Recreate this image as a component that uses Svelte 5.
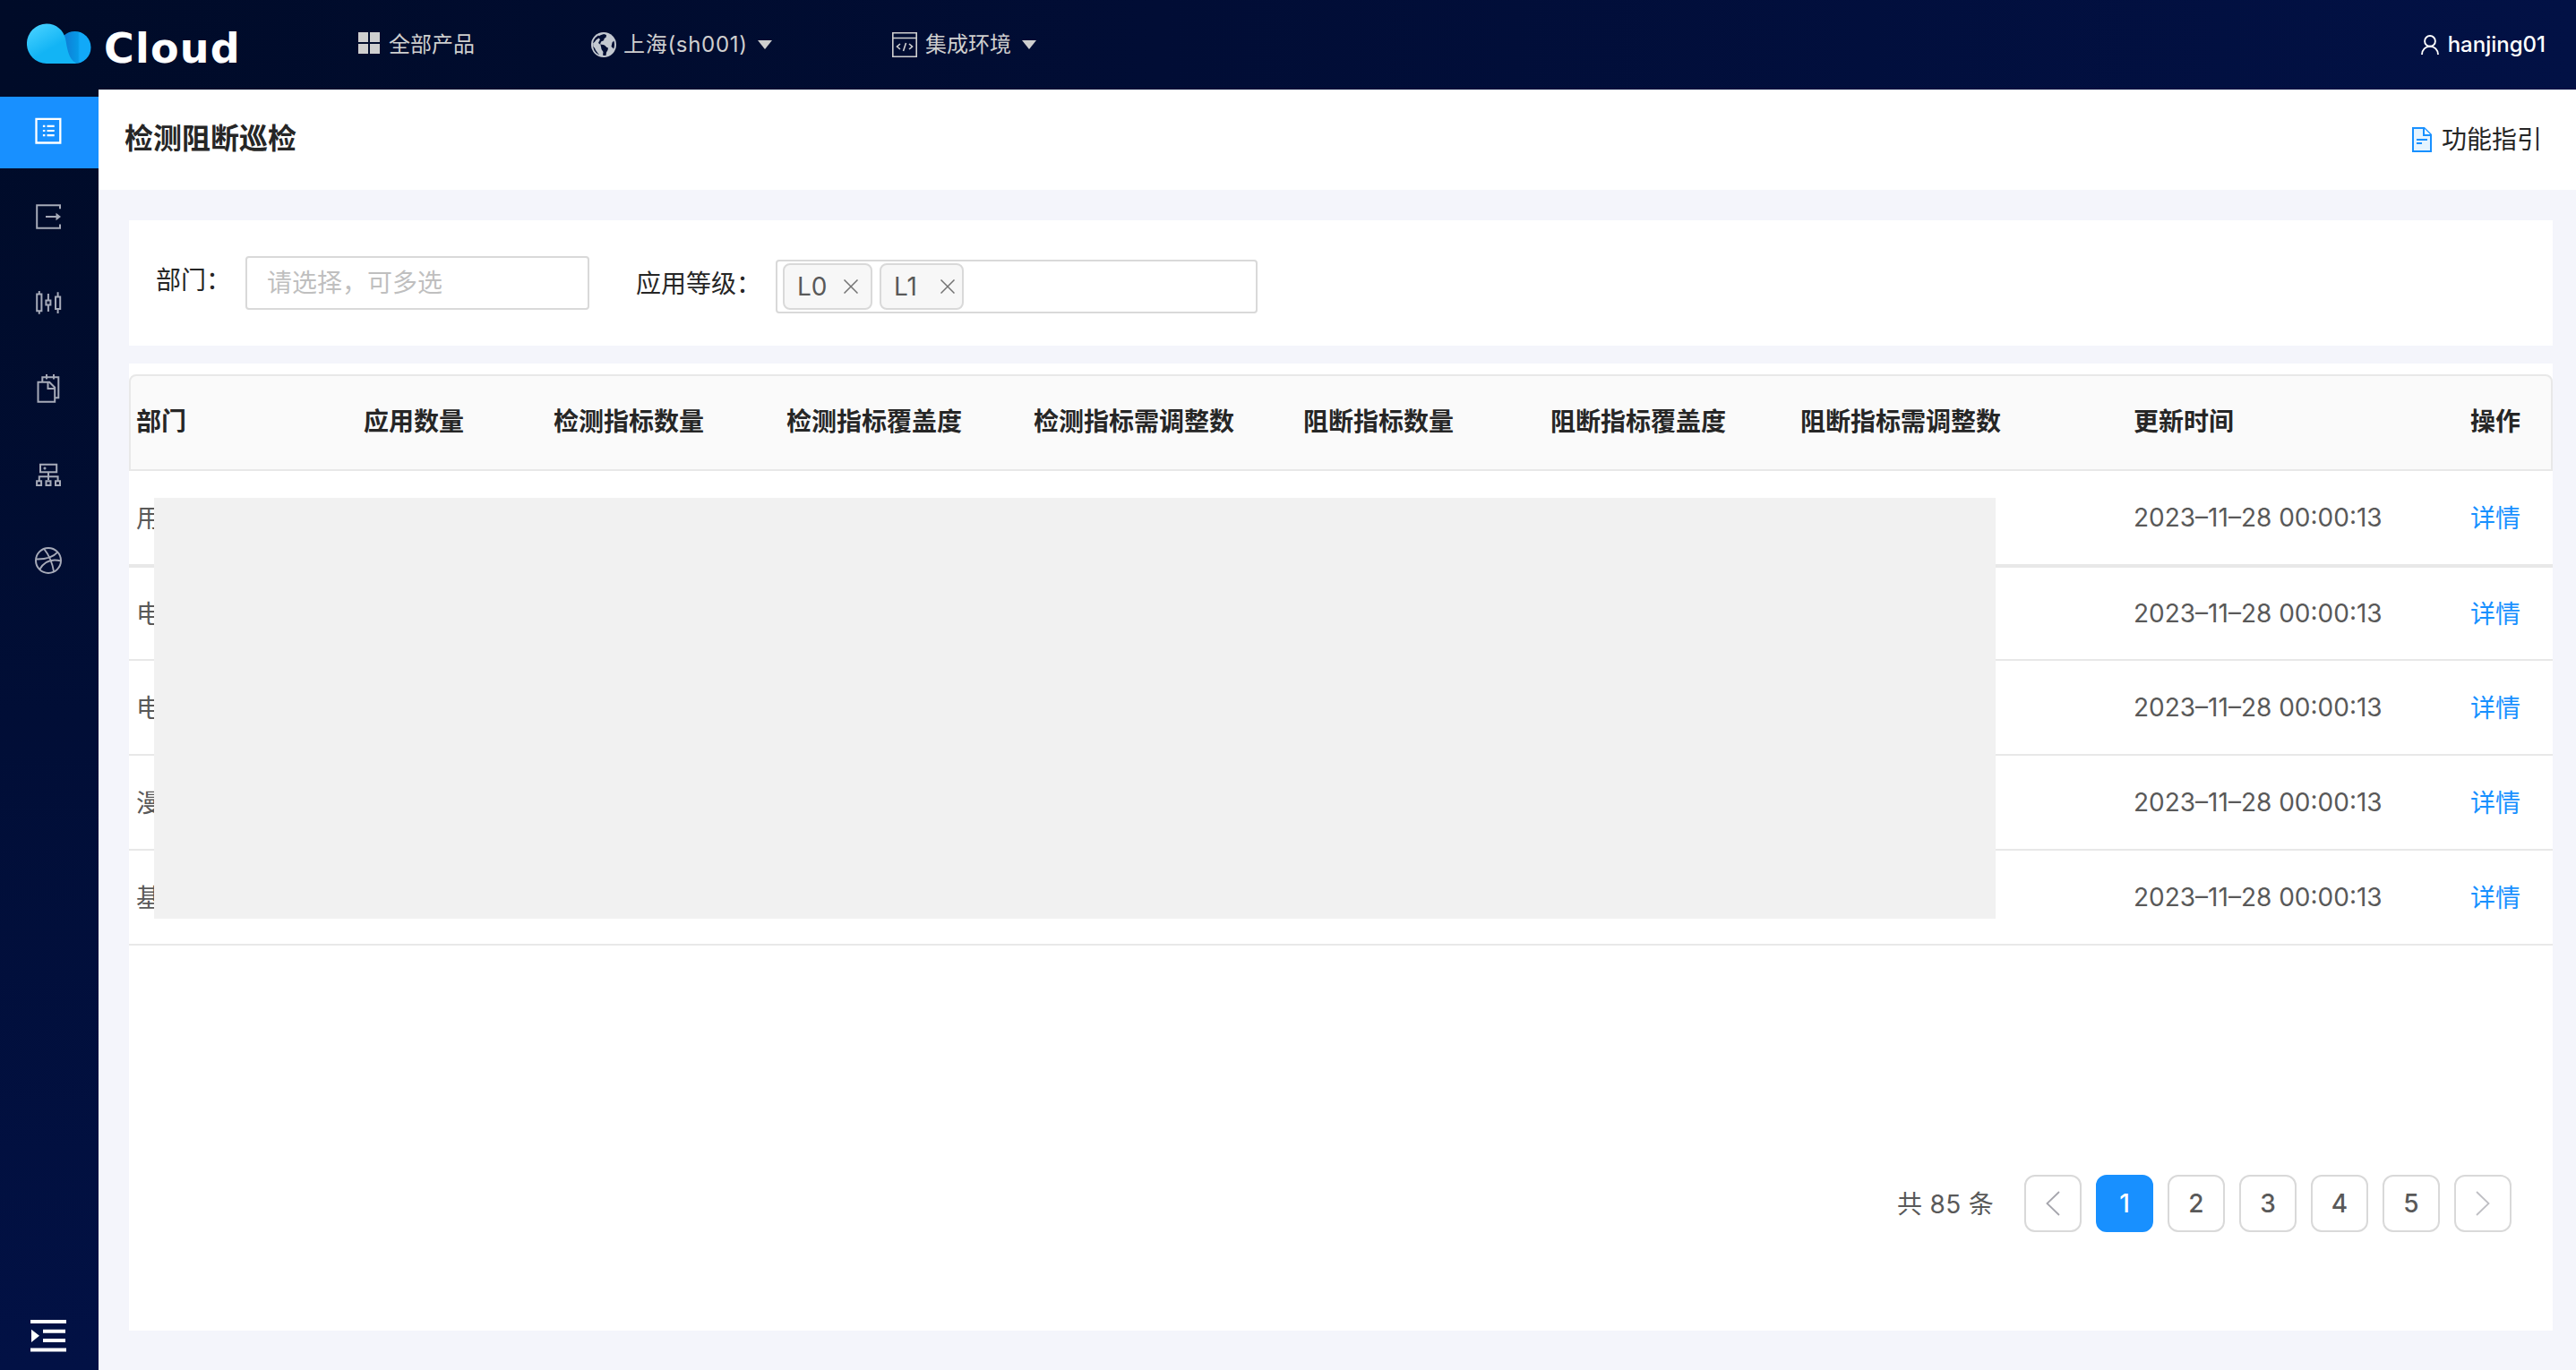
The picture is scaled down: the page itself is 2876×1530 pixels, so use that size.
<script>
	let activeMenu = $state("inspect");
	let page = $state(1);
	let levels = $state(["L0", "L1"]);

	const menus = ["inspect", "export", "metrics", "docs", "cluster", "network"];
	const pages = [1, 2, 3, 4, 5];

	const columns = [
		"部门",
		"应用数量",
		"检测指标数量",
		"检测指标覆盖度",
		"检测指标需调整数",
		"阻断指标数量",
		"阻断指标覆盖度",
		"阻断指标需调整数",
		"更新时间",
		"操作",
	];

	const rows = [
		{ dept: "用", time: "2023–11–28 00:00:13" },
		{ dept: "电", time: "2023–11–28 00:00:13" },
		{ dept: "电", time: "2023–11–28 00:00:13" },
		{ dept: "漫", time: "2023–11–28 00:00:13" },
		{ dept: "基", time: "2023–11–28 00:00:13" },
	];

	const removeLevel = (level) => {
		levels = levels.filter((l) => l !== level);
	};
</script>

<div class="app">
	<header>
		<div class="logo">
			<svg width="72" height="46" viewBox="0 0 72 46">
				<defs>
					<linearGradient id="cloud" x1="0" y1="0" x2="0.7" y2="1">
						<stop offset="0.1" stop-color="#45d0ff" />
						<stop offset="0.65" stop-color="#12b4f5" />
					</linearGradient>
					<linearGradient id="puff" x1="0" y1="0" x2="1" y2="0">
						<stop offset="0" stop-color="#1173d0" />
						<stop offset="0.6" stop-color="#0799e6" />
						<stop offset="0.65" stop-color="#11a9f8" />
					</linearGradient>
				</defs>
				<circle cx="53.5" cy="27" r="18" fill="url(#puff)" />
				<path d="M22 .5C33 .5 41 8 43 17c2 10 3 23 12 27.500Q54 45 52 45H22A22 22.200 0 0 1 22 .5Z" fill="url(#cloud)" />
			</svg>
			<span class="brand">Cloud</span>
		</div>
		<nav>
			<a class="products" href="#products">
				<svg width="24" height="24" viewBox="0 0 24 24" fill="currentColor">
					<path d="M0 0h11v11H0zM13 0h11v11H13zM0 13h11v11H0zM13 13h11v11H13z" />
				</svg>
				<span>全部产品</span>
			</a>
			<a class="region" href="#region">
				<svg width="28" height="28" viewBox="0 0 28 28">
					<circle cx="14" cy="14" r="14" fill="#c3c8d0" />
					<path d="M14 2l3 1-.3 2.500-2.700 2 .3 1.500-3.300 1.500-1 3 3.500.5 2.500 2.500 3 1-.5 2.500-1.500 2.500-.5 3.500a12 12 0 0 1-3 0l-.5-3-2-3 .5-2.500-3-3L4.500 13 6.500 9.500 9 7l.5-2.500L8 3.600A12 12 0 0 0 2.300 16l3.200 3 3.500 6.500a12.500 12.500 0 0 1-7-13z" fill="#020e33" fill-rule="evenodd" />
					<path d="M4.500 9.500C6 6 9 3.500 12.500 2.600L16 3l-2 3 .5 2-3.500 2-2 3-3-.5zM12 14l3 .5 3 3-.5 2.500L15 24l-.5 1.500h-1L13 22l-2-3zM25.300 9.500c1 3 1 6-.2 9L22.500 16l1-4.500z" fill="#020e33" />
					<path d="M5 9l3.500-2.500L10 8l-2 4 2.500 2 1 5 2 3-.5 3.500L8 24l-3-4-2-5z" fill="#c3c8d0" />
				</svg>
				<span class="code">上海(sh001)</span>
				<i class="caret"></i>
			</a>
			<a class="env" href="#env">
				<svg width="28" height="28" viewBox="0 0 28 28" fill="none" stroke="currentColor" stroke-width="1.600">
					<path d="M.8.8h26.400v26.400H.8zM.8 6.500h26.400M9 13l-3.500 3L9 19M19 13l3.500 3-3.500 3M15.500 12l-3 9" />
				</svg>
				<span>集成环境</span>
				<i class="caret"></i>
			</a>
		</nav>
		<div class="user">
			<svg width="20" height="22" viewBox="0 0 20 22" fill="none" stroke="currentColor" stroke-width="1.900">
				<circle cx="10" cy="6.900" r="5.900" />
				<path d="M1 22c0-5.500 4-9.200 9-9.200s9 3.700 9 9.200" />
			</svg>
			<span>hanjing01</span>
		</div>
	</header>

	<div class="body">
		<aside>
			<div class="menu">
				{#each menus as menu}
					<button type="button" class:active={menu === activeMenu} aria-label={menu} onclick={() => (activeMenu = menu)}>
						<svg width="32" height="32" viewBox="0 0 32 32" fill="none" stroke="currentColor" stroke-width="2">
							{#if menu === "inspect"}
								<path d="M2.500 2.900h26.800v26.600H2.500z" stroke-width="2.300" />
								<path d="M9.900 10.900h2.500M9.900 16h2.500M9.900 21.200h2.500M14.500 10.900h8.200M14.500 16h8.200M14.500 21.200h8.200" stroke-width="2.200" />
							{:else if menu === "export"}
								<path d="M29 7.200V3.200H3.200v25.600H29v-4.200M13 16h13" />
								<path d="M24.500 11.800L30 16l-5.500 4.200z" fill="currentColor" stroke="none" />
							{:else if menu === "metrics"}
								<path d="M3.200 6.500h5.200v18.800H3.200zM5.800 3v3.500M5.800 25.300v3.500M13.400 13.600h5v5h-5zM15.900 6v7.500M15.900 18.600V26M24 9.500h5.200v13.500H24zM26.600 4.200v5.300M26.600 23v5" />
							{:else if menu === "docs"}
								<path d="M4.500 8.700H17.200l6 6v16H4.500zM15.500 9v7h7.200M9.300 8V3.200h18v23h-3.500M14 0v5.500M22 0v5.500" />
							{:else if menu === "cluster"}
								<path d="M7 4.700h18.200v8.600H7zM16 13.500V22M5.800 23v-4.800h20.800V23M3.100 23.200h5v4.800h-5zM13.500 23.200h5v4.800h-5zM24 23.200h5v4.800h-5z" />
								<path d="M10.500 9h3M12 7.500v3" stroke-width="1.500" />
							{:else}
								<circle cx="16" cy="16" r="14" />
								<path d="M11.200 3c5.300 6.500 9.300 15.500 11 26M2 14.400c10 .3 18.500-1.200 24.300-7.800M6.200 26c5-9 13-12.400 23.800-9.600" stroke-width="1.900" />
							{/if}
						</svg>
					</button>
				{/each}
			</div>
			<div class="collapse">
				<svg width="40" height="36" viewBox="0 0 40 36" fill="#fff">
					<path d="M0 0h40v4H0zM14 10.700h25v4H14zM14 21h25v4H14zM0 31.500h40v4H0zM1 10.700l9 7.100-9 7.100z" />
				</svg>
			</div>
		</aside>

		<main>
			<div class="title-bar">
				<h1>检测阻断巡检</h1>
				<a class="guide" href="#guide">
					<svg width="22" height="28" viewBox="0 0 22 28" fill="none" stroke="#1890ff" stroke-width="2">
						<path d="M1 1h12.500L21 8.500V27H1z" fill="#e6f4ff" />
						<path d="M13 1v8h8" fill="#fff" />
						<path d="M5 14h12M5 18h6" />
					</svg>
					<span>功能指引</span>
				</a>
			</div>

			<section class="filters">
				<label class="dept-label" for="dept">部门：</label>
				<input id="dept" placeholder="请选择，可多选" />
				<span class="level-label">应用等级：</span>
				<div class="select">
					{#each levels as level}
						<span class="tag" class:last={level === "L1"}>
							{level}
							<button type="button" class="close" aria-label="remove" onclick={() => removeLevel(level)}>
								<svg width="16" height="16" viewBox="0 0 16 16" stroke="#737373" stroke-width="1.500">
									<path d="M.5.5l15 15M15.500.5l-15 15" />
								</svg>
							</button>
						</span>
					{/each}
				</div>
			</section>

			<section class="card">
				<div class="table">
					<div class="row head">
						{#each columns as column}
							<div>{column}</div>
						{/each}
					</div>
					{#each rows as row}
						<div class="row">
							<div>{row.dept}</div>
							<div class="time">{row.time}</div>
							<div><a href="#detail">详情</a></div>
						</div>
					{/each}
					<!-- covers the figures of every department -->
					<div class="mask"></div>
				</div>

				<div class="pagination">
					<span class="total">共 85 条</span>
					<button type="button" aria-label="prev">
						<svg width="16" height="28" viewBox="0 0 16 28" fill="none" stroke="#a6a6ad" stroke-width="1.800"><path d="M15 1L1.500 14 15 27" /></svg>
					</button>
					{#each pages as n}
						<button type="button" class:current={n === page} onclick={() => (page = n)}>{n}</button>
					{/each}
					<button type="button" aria-label="next">
						<svg width="16" height="28" viewBox="0 0 16 28" fill="none" stroke="#bfbfc4" stroke-width="1.800"><path d="M1 1l13.500 13L1 27" /></svg>
					</button>
				</div>
			</section>
		</main>
	</div>
</div>

<style>
	:global(body) {
		margin: 0;
	}

	.app {
		width: 2876px;
		height: 1530px;
		display: flex;
		flex-direction: column;
		overflow: hidden;
		font-family: Inter, "Noto Sans CJK SC", sans-serif;
		font-size: 28px;
		color: #262626;
		background: #f4f5fb;
	}

	.app * {
		box-sizing: border-box;
	}

	a {
		color: inherit;
		text-decoration: none;
	}

	svg {
		display: block;
		flex: none;
	}

	button {
		font: inherit;
		padding: 0;
		cursor: pointer;
	}

	header {
		height: 100px;
		flex: none;
		display: flex;
		align-items: center;
		padding: 0 34px 0 30px;
		background: linear-gradient(90deg, #000b28, #010d35 45%, #021145);
		color: #cfcfcf;
		font-size: 24px;
	}

	.logo {
		display: flex;
		align-items: center;
		width: 370px;
		gap: 14px;
		padding-bottom: 2px;
	}

	.brand {
		font-family: "DejaVu Sans", sans-serif;
		font-weight: bold;
		font-size: 46px;
		line-height: 46px;
		letter-spacing: 1.2px;
		color: #fff;
		padding-top: 10px;
	}

	nav {
		flex: 1;
		display: flex;
		align-items: center;
	}

	nav a {
		display: flex;
		align-items: center;
		height: 28px;
		line-height: 28px;
	}

	.products {
		width: 260px;
		gap: 10px;
		margin-bottom: 4px;
	}

	.products span {
		padding-top: 3px;
	}

	.region {
		width: 336px;
		gap: 8px;
	}

	.code {
		letter-spacing: 0.7px;
	}

	.env {
		gap: 9px;
	}

	.caret {
		border: 8.500px solid transparent;
		border-top: 10px solid currentColor;
		border-bottom: 0;
		margin-left: 3px;
	}

	.user {
		display: flex;
		align-items: center;
		gap: 10px;
		color: #fff;
		font-weight: 500;
	}

	.user span {
		padding-bottom: 1px;
	}

	.body {
		flex: 1;
		display: flex;
	}

	aside {
		width: 110px;
		flex: none;
		display: flex;
		flex-direction: column;
		justify-content: space-between;
		padding: 8px 0 20px;
		background: linear-gradient(#000b28, #021145);
	}

	.menu {
		display: flex;
		flex-direction: column;
		gap: 16px;
	}

	.menu button {
		height: 80px;
		display: flex;
		padding: 22px 0 0 38px;
		border: 0;
		background: none;
		color: #a6aab8;
	}

	.menu button.active {
		background: #1890ff;
		color: #fff;
	}

	.collapse {
		padding-left: 34px;
	}

	main {
		flex: 1;
		min-width: 0;
		display: flex;
		flex-direction: column;
	}

	.title-bar {
		height: 112px;
		display: flex;
		align-items: center;
		justify-content: space-between;
		padding: 0 38px 0 29px;
		background: #fff;
	}

	h1 {
		margin: 0;
		font-size: 32px;
		font-weight: 600;
		line-height: 44px;
		padding-bottom: 3px;
	}

	.guide {
		display: flex;
		align-items: center;
		gap: 11px;
		line-height: 40px;
	}

	.filters {
		height: 140px;
		margin: 34px 26px 20px 34px;
		padding: 40px 30px;
		display: flex;
		align-items: flex-start;
		background: #fff;
	}

	.dept-label {
		width: 100px;
		line-height: 54px;
	}

	.level-label {
		width: 156px;
		margin-left: 52px;
		line-height: 62px;
	}

	input {
		width: 384px;
		height: 60px;
		border: 2px solid #d9d9d9;
		border-radius: 4px;
		padding: 0 22px;
		font: inherit;
	}

	input::placeholder {
		color: #bfbfbf;
		opacity: 1;
	}

	.select {
		width: 538px;
		height: 60px;
		margin-top: 4px;
		padding: 2px 6px;
		display: flex;
		gap: 8px;
		border: 2px solid #d9d9d9;
		border-radius: 4px;
	}

	.tag {
		width: 100px;
		height: 52px;
		display: flex;
		align-items: center;
		justify-content: space-between;
		padding: 0 14px;
		border: 2px solid #d9d9d9;
		border-radius: 8px;
		background: #f7f7f7;
		color: #595959;
	}

	.tag.last {
		width: 94px;
		padding-right: 8px;
	}

	.close {
		border: 0;
		background: none;
	}

	.card {
		height: 1080px;
		margin: 0 26px 0 34px;
		padding-top: 12px;
		display: flex;
		flex-direction: column;
		background: #fff;
	}

	.table {
		position: relative;
	}

	.row {
		height: 106px;
		display: grid;
		grid-template-columns: 254px 212px 260px 276px 301px 276px 279px 372px 376px 1fr;
		align-items: center;
		border-bottom: 2px solid #e8e8e8;
		color: #595959;
	}

	.row > div {
		padding: 0 0 2px 8px;
		white-space: nowrap;
	}

	.row .time {
		grid-column: 9;
		padding-bottom: 0;
	}

	.row a {
		color: #1890ff;
	}

	.row.head {
		height: 108px;
		border: 2px solid #e8e8e8;
		border-radius: 8px 8px 0 0;
		background: #fafafa;
		color: #262626;
		font-weight: 600;
	}

	.row.head > div {
		padding: 0 0 6px 6px;
	}

	.head + .row + .row {
		border-top: 2px solid #e8e8e8;
	}

	.table .mask {
		position: absolute;
		left: 28px;
		top: 138px;
		width: 2056px;
		height: 470px;
		background: #f1f1f1;
	}

	.pagination {
		display: flex;
		align-items: center;
		justify-content: flex-end;
		gap: 16px;
		margin: 256px 46px 0 0;
		color: #595959;
	}

	.total {
		margin-right: 18px;
		padding-bottom: 3px;
		letter-spacing: 0.3px;
	}

	.pagination button {
		width: 64px;
		height: 64px;
		display: flex;
		align-items: center;
		justify-content: center;
		border: 2px solid #d9d9d9;
		border-radius: 12px;
		background: #fff;
		color: #595959;
		font-weight: 500;
	}

	.pagination .current {
		border-color: #1890ff;
		background: #1890ff;
		color: #fff;
	}
</style>
